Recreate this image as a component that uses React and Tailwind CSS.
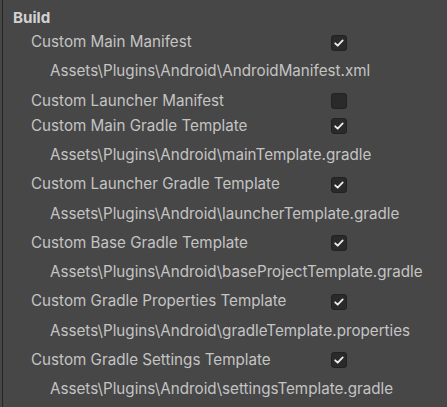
import React from 'react';

const rows = [
  { label: 'Custom Main Manifest', path: 'Assets\\Plugins\\Android\\AndroidManifest.xml', checked: true },
  { label: 'Custom Launcher Manifest', path: null, checked: false },
  { label: 'Custom Main Gradle Template', path: 'Assets\\Plugins\\Android\\mainTemplate.gradle', checked: true },
  { label: 'Custom Launcher Gradle Template', path: 'Assets\\Plugins\\Android\\launcherTemplate.gradle', checked: true },
  { label: 'Custom Base Gradle Template', path: 'Assets\\Plugins\\Android\\baseProjectTemplate.gradle', checked: true },
  { label: 'Custom Gradle Properties Template', path: 'Assets\\Plugins\\Android\\gradleTemplate.properties', checked: true },
  { label: 'Custom Gradle Settings Template', path: 'Assets\\Plugins\\Android\\settingsTemplate.gradle', checked: true },
];

const Checkbox = ({ checked }) => (
  <div className="w-[16px] h-[16px] rounded-[3px] bg-[#2a2a2a] border border-[#212121] flex items-center justify-center">
    {checked && (
      <svg className="w-[12px] h-[12px]" viewBox="0 0 12 12" fill="none">
        <path d="M2.2 6.3l2.5 2.4 5-5.3" stroke="#eeeeee" strokeWidth="1.8" strokeLinecap="round" strokeLinejoin="round" />
      </svg>
    )}
  </div>
);

const App = () => {
  return (
    <div className="w-[447px] h-[407px] bg-[#474747] pl-[2px] overflow-hidden" style={{ fontFamily: 'Inter, "Noto Sans", sans-serif' }}>
      <div className="h-full border-l border-[#262626] pt-[6px] text-[15.2px] text-[#c4c4c4]">
        <div className="h-[24px] flex items-center pl-[10px] font-bold text-[#d2d2d2]">Build</div>
        {rows.map(row => (
          <div key={row.label}>
            <div className="h-[25px] flex items-center pl-[28px]">
              <div className="w-[300px]">{row.label}</div>
              <Checkbox checked={row.checked} />
            </div>
            {row.path && (
              <div className="h-[33.6px] flex items-center pl-[47px]">{row.path}</div>
            )}
          </div>
        ))}
      </div>
    </div>
  );
};

export default App;
